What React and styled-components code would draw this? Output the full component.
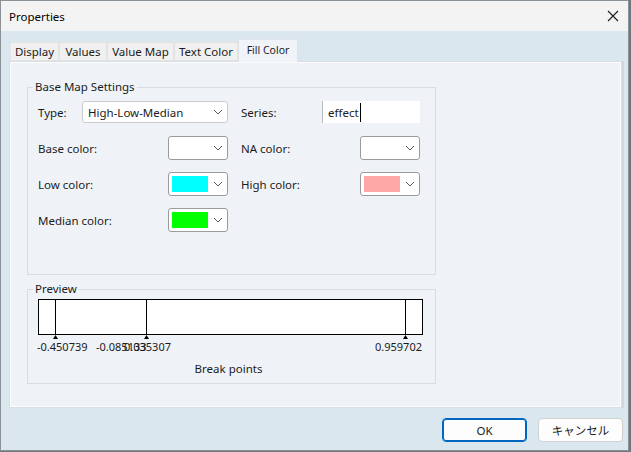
import React from "react";
import styled, { createGlobalStyle } from "styled-components";

const Global = createGlobalStyle`
  html, body {
    margin: 0;
    padding: 0;
    background: #6f777d;
  }
  body {
    font-family: "Noto Sans", "Noto Sans CJK JP", sans-serif;
    font-size: 11px;
    color: #1b1b1b;
  }
`;

const Window = styled.div`
  width: 629px;
  height: 451px;
  box-sizing: border-box;
  border: 1px solid #8b9297;
  display: flex;
  flex-direction: column;
  background: #dae7ef;
`;

const TitleBar = styled.div`
  height: 30px;
  flex: none;
  display: flex;
  align-items: center;
  justify-content: space-between;
  padding: 0 9px 0 8px;
  background: #f3f3f3;
`;

const Title = styled.span`
  font-size: 11.5px;
  color: #000;
`;

const Body = styled.div`
  flex: 1;
  display: flex;
  flex-direction: column;
  padding: 8px 5px 0 8px;
`;

const TabStrip = styled.div`
  display: flex;
  align-items: flex-end;
  height: 22px;
  padding-left: 1px;
  position: relative;
  z-index: 1;
`;

const Tab = styled.div`
  box-sizing: border-box;
  width: ${(p) => p.$w}px;
  height: ${(p) => (p.$active ? 23 : 19)}px;
  margin-bottom: ${(p) => (p.$active ? -1 : 0)}px;
  display: flex;
  justify-content: center;
  align-items: ${(p) => (p.$active ? "flex-start" : "center")};
  padding-top: ${(p) => (p.$active ? 3 : 0)}px;
  background: ${(p) => (p.$active ? "#f0f4f8" : "#f0f0f0")};
  border: 1px solid ${(p) => (p.$active ? "#dfe3e7" : "#e3e3e3")};
  border-bottom: ${(p) => (p.$active ? "none" : "1px solid #e3e3e3")};
  font-size: ${(p) => (p.$active ? 10.5 : 11.5)}px;
  color: #1b1b1b;
  white-space: nowrap;
`;

const Panel = styled.div`
  box-sizing: border-box;
  width: 613px;
  height: 347px;
  background: #eff3f7;
  border: 1px solid #d9dee3;
  box-shadow: inset 0 0 0 1px #fbfcfd, 2px 0 0 #d3d7db;
  padding: 17px 0 0 17px;
  display: flex;
  flex-direction: column;
`;

const Group = styled.fieldset`
  box-sizing: border-box;
  width: 409px;
  margin: ${(p) => p.$top || 0}px 0 0 0;
  padding: ${(p) => p.$pad};
  border: 1px solid #dadde0;
  min-width: 0;
`;

const Legend = styled.legend`
  margin-left: -5px;
  padding: 0 2px;
  line-height: 16px;
  font-size: 11.5px;
  color: #1b1b1b;
`;

const Grid = styled.div`
  display: grid;
  grid-template-columns: 190px 179px;
  grid-auto-rows: 24px;
  column-gap: 13px;
  row-gap: 12px;
`;

const Row = styled.div`
  display: flex;
  align-items: center;
  justify-content: space-between;
`;

const Label = styled.span`
  white-space: nowrap;
  font-size: 11.5px;
`;

const Combo = styled.div`
  box-sizing: border-box;
  width: ${(p) => p.$w}px;
  height: ${(p) => p.$h}px;
  background: #fff;
  border: 1px solid ${(p) => p.$border};
  border-radius: 3px;
  display: flex;
  align-items: center;
  padding: 0 4px 0 ${(p) => p.$padL}px;
`;

const ComboText = styled.span`
  flex: 1;
  white-space: nowrap;
  font-size: 11.5px;
`;

const Swatch = styled.span`
  width: 36px;
  height: 16px;
  background: ${(p) => p.$color || "transparent"};
  flex: none;
`;

const Spacer = styled.span`
  flex: 1;
`;

const Chevron = () => (
  <svg width="10" height="6" viewBox="0 0 10 6" style={{ flex: "none" }}>
    <polyline points="1,1 5,5 9,1" fill="none" stroke="#5a5a5a" strokeWidth="1" />
  </svg>
);

const TextBox = styled.div`
  box-sizing: border-box;
  width: 98px;
  height: 22px;
  align-self: flex-start;
  margin-top: 1px;
  background: #fff;
  border-left: 1px solid #b9bcbf;
  display: flex;
  align-items: center;
  padding-left: 5px;
  font-size: 11.5px;
`;

const Caret = styled.span`
  width: 1px;
  height: 19px;
  background: #000;
  margin-left: 1px;
`;

const Chart = styled.div`
  position: relative;
  width: 385px;
  height: 56px;
`;

const TickLabel = styled.span`
  position: absolute;
  top: 40px;
  line-height: 16px;
  white-space: nowrap;
  ${(p) => (p.$right != null ? `right: ${p.$right}px;` : `left: ${p.$left}px;`)}
`;

const Caption = styled.div`
  width: 385px;
  text-align: center;
  line-height: 16px;
  margin-top: 6px;
  padding-right: 4px;
  box-sizing: border-box;
  font-size: 11.5px;
`;

const ButtonRow = styled.div`
  display: flex;
  justify-content: flex-end;
  gap: 11px;
  padding-top: 10px;
`;

const Button = styled.button`
  box-sizing: border-box;
  width: 85px;
  height: 24px;
  border-radius: 4px;
  background: #fdfdfd;
  border: 1px solid ${(p) => (p.$primary ? "#0067c0" : "#d0d0d0")};
  box-shadow: ${(p) => (p.$primary ? "inset 0 0 0 1px #0067c0" : "none")};
  font-family: "Noto Sans", "Noto Sans CJK JP", sans-serif;
  font-size: 11.5px;
  color: #1b1b1b;
  padding: 0;
`;

const tabs = [
  ["Display", 49],
  ["Values", 48],
  ["Value Map", 67],
  ["Text Color", 64],
  ["Fill Color", 60],
];

const ticks = [17, 108, 367];

const labels = [
  { text: "-0.450739", left: -1 },
  { text: "-0.085133", left: 58 },
  { text: "0.035307", left: 86 },
  { text: "0.959702", right: 1 },
];

function ColorCombo({ color }) {
  return (
    <Combo $w={60} $h={24} $border="#9b9b9b" $padL={3}>
      <Swatch $color={color} />
      <Spacer />
      <Chevron />
    </Combo>
  );
}

export default function App() {
  return (
    <>
      <Global />
      <Window>
        <TitleBar>
          <Title>Properties</Title>
          <svg width="12" height="12" viewBox="0 0 12 12">
            <path d="M1 1 L11 11 M11 1 L1 11" stroke="#1b1b1b" strokeWidth="1.1" />
          </svg>
        </TitleBar>
        <Body>
          <TabStrip>
            {tabs.map(([name, w]) => (
              <Tab key={name} $w={w} $active={name === "Fill Color"}>
                {name}
              </Tab>
            ))}
          </TabStrip>
          <Panel>
            <Group $pad="5px 14px 42px 10px">
              <Legend>Base Map Settings</Legend>
              <Grid>
                <Row>
                  <Label>Type:</Label>
                  <Combo $w={146} $h={22} $border="#cbcbcb" $padL={5}>
                    <ComboText>High-Low-Median</ComboText>
                    <Chevron />
                  </Combo>
                </Row>
                <Row>
                  <Label>Series:</Label>
                  <TextBox>
                    effect
                    <Caret />
                  </TextBox>
                </Row>
                <Row>
                  <Label>Base color:</Label>
                  <ColorCombo />
                </Row>
                <Row>
                  <Label>NA color:</Label>
                  <ColorCombo />
                </Row>
                <Row>
                  <Label>Low color:</Label>
                  <ColorCombo color="#00ffff" />
                </Row>
                <Row>
                  <Label>High color:</Label>
                  <ColorCombo color="#ffa8a8" />
                </Row>
                <Row>
                  <Label>Median color:</Label>
                  <ColorCombo color="#00ff00" />
                </Row>
              </Grid>
            </Group>
            <Group $top={6} $pad="2px 10px 6px 10px">
              <Legend>Preview</Legend>
              <Chart>
                <svg width="385" height="41" viewBox="0 0 385 41" style={{ display: "block" }}>
                  <rect x="0.5" y="0.5" width="384" height="35" fill="#fff" stroke="#000" />
                  {ticks.map((x) => (
                    <g key={x}>
                      <line x1={x + 0.5} y1="0" x2={x + 0.5} y2="36" stroke="#000" />
                      <polygon points={`${x + 0.5},36 ${x + 3},40 ${x - 2},40`} fill="#000" />
                    </g>
                  ))}
                </svg>
                {labels.map((l) => (
                  <TickLabel key={l.text} $left={l.left} $right={l.right}>
                    {l.text}
                  </TickLabel>
                ))}
              </Chart>
              <Caption>Break points</Caption>
            </Group>
          </Panel>
          <ButtonRow>
            <Button $primary>OK</Button>
            <Button>キャンセル</Button>
          </ButtonRow>
        </Body>
      </Window>
    </>
  );
}
